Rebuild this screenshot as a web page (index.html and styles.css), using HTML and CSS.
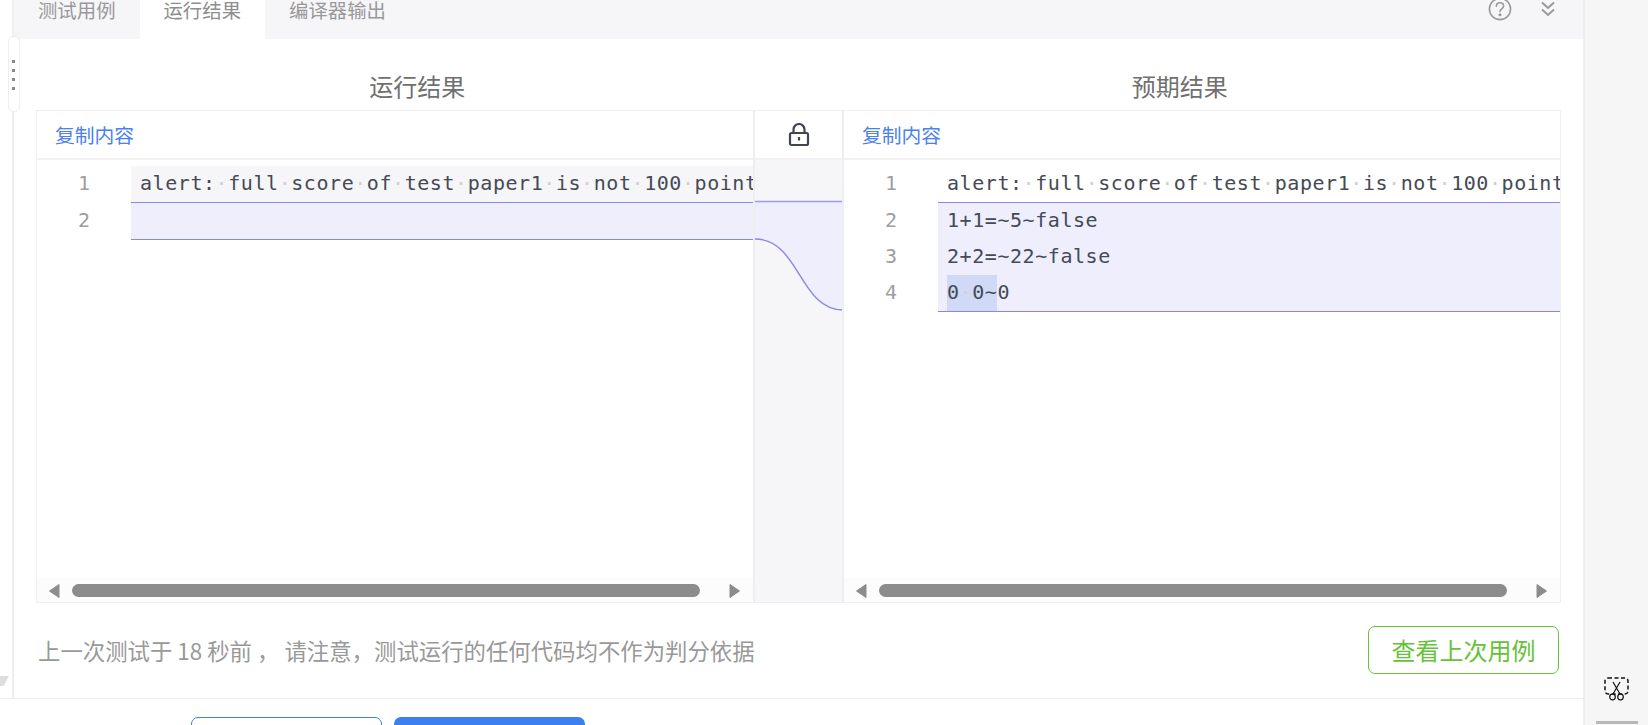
FILE: index.html
```html
<!DOCTYPE html>
<html lang="zh-CN">
<head>
<meta charset="utf-8">
<title>运行结果</title>
<link rel="stylesheet" href="styles.css">
</head>
<body>
<div class="page">
  <div class="left">
    <div class="work">
      <div class="gutter"></div>
      <main class="main">
        <div class="tabs">
          <div class="tab">测试用例</div>
          <div class="tab tab-active">运行结果</div>
          <div class="tab">编译器输出</div>
          <div class="tools">
            <svg class="help" width="24" height="24" viewBox="0 0 24 24" fill="none" stroke="#999" stroke-width="1.6"><circle cx="12" cy="12" r="10.6"/><path d="M8.400 9.200c0-2 1.600-3.400 3.600-3.400s3.600 1.300 3.600 3.200c0 2.600-3.600 2.700-3.600 5.600" stroke-linecap="round"/><circle cx="12" cy="17.800" r=".7" fill="#999"/></svg>
            <svg class="fold" width="16" height="16" viewBox="0 0 16 16" fill="none" stroke="#999" stroke-width="2"><path d="M2 1.500 8 7l6-5.500"/><path d="M2 8.500 8 14l6-5.500"/></svg>
          </div>
        </div>
        <div class="content">
          <div class="titles">
            <h2 class="title">运行结果</h2>
            <h2 class="title">预期结果</h2>
          </div>
          <div class="compare">
            <section class="pane">
              <div class="pane-head"><a class="copy">复制内容</a></div>
              <div class="pane-body">
                <div class="code">
                  <div class="line line-same">
                    <span class="num">1</span>
                    <span class="txt">alert:<i class="ws">·</i>full<i class="ws">·</i>score<i class="ws">·</i>of<i class="ws">·</i>test<i class="ws">·</i>paper1<i class="ws">·</i>is<i class="ws">·</i>not<i class="ws">·</i>100<i class="ws">·</i>points</span>
                  </div>
                  <div class="diff">
                    <div class="line">
                      <span class="num num-out">2</span>
                      <span class="txt"></span>
                    </div>
                  </div>
                </div>
                <div class="scrollbar">
                  <svg class="arrow" width="12" height="16" viewBox="0 0 12 16"><path d="M11 1.500v13L1.500 8z" fill="#8c8c8c" stroke="#8c8c8c" stroke-linejoin="round"/></svg>
                  <div class="thumb"></div>
                  <svg class="arrow arrow-end" width="12" height="16" viewBox="0 0 12 16"><path d="M1 1.500v13L10.500 8z" fill="#8c8c8c" stroke="#8c8c8c" stroke-linejoin="round"/></svg>
                </div>
              </div>
            </section>
            <section class="mid">
              <div class="mid-head">
                <svg width="22" height="24" viewBox="0 0 22 24" fill="none" stroke="#3f4652" stroke-width="2.200"><rect x="2" y="10" width="18" height="12" rx="1.500"/><path d="M5.500 10V6.500a5.500 5.500 0 0 1 11 0V10"/><path d="M11 14v3.500"/></svg>
              </div>
              <svg class="connector" width="88" height="442" viewBox="0 0 89 442" preserveAspectRatio="none">
                <path d="M0 42.500H89V151.500C45 151.500 45 80.500 0 80.500Z" fill="#eeeefd"/>
                <path d="M0 42.500H89" stroke="#9c98ec" stroke-width="1.500" fill="none"/>
                <path d="M0 80C45 80 45 151 89 151" stroke="#8a86e8" stroke-width="1.400" fill="none"/>
              </svg>
            </section>
            <section class="pane pane-right">
              <div class="pane-head"><a class="copy">复制内容</a></div>
              <div class="pane-body">
                <div class="code">
                  <div class="line">
                    <span class="num">1</span>
                    <span class="txt">alert:<i class="ws">·</i>full<i class="ws">·</i>score<i class="ws">·</i>of<i class="ws">·</i>test<i class="ws">·</i>paper1<i class="ws">·</i>is<i class="ws">·</i>not<i class="ws">·</i>100<i class="ws">·</i>points</span>
                  </div>
                  <div class="diff">
                    <div class="line">
                      <span class="num num-out">2</span>
                      <span class="txt">1+1=~5~false</span>
                    </div>
                    <div class="line">
                      <span class="num num-out">3</span>
                      <span class="txt">2+2=~22~false</span>
                    </div>
                    <div class="line">
                      <span class="num num-out">4</span>
                      <span class="txt"><b class="mark">0<i class="ws">·</i>0~</b>0</span>
                    </div>
                  </div>
                </div>
                <div class="scrollbar">
                  <svg class="arrow" width="12" height="16" viewBox="0 0 12 16"><path d="M11 1.500v13L1.500 8z" fill="#8c8c8c" stroke="#8c8c8c" stroke-linejoin="round"/></svg>
                  <div class="thumb"></div>
                  <svg class="arrow arrow-end" width="12" height="16" viewBox="0 0 12 16"><path d="M1 1.500v13L10.500 8z" fill="#8c8c8c" stroke="#8c8c8c" stroke-linejoin="round"/></svg>
                </div>
              </div>
            </section>
          </div>
          <div class="foot">
            <p class="note">上一次测试于 18 秒前 ， 请注意，测试运行的任何代码均不作为判分依据</p>
            <button class="btn-last">查看上次用例</button>
          </div>
        </div>
      </main>
    </div>
    <div class="actions">
      <div class="action action-plain"></div>
      <div class="action action-primary"></div>
    </div>
  </div>
  <aside class="strip">
    <svg class="cut" width="26" height="24" viewBox="0 0 26 24" fill="none" stroke="#111" stroke-width="1.500">
      <rect x="1" y="1" width="23" height="16" rx="3" stroke-dasharray="4 2.500"/>
      <path d="M9 5l7 12M16 5 9 17" stroke-width="1.200"/>
      <circle cx="8.500" cy="20" r="2.800" stroke-width="1.200" fill="#f6f6f6"/>
      <circle cx="16.500" cy="20" r="2.800" stroke-width="1.200" fill="#f6f6f6"/>
    </svg>
    <div class="strip-line"></div>
  </aside>
  <div class="handle"><span></span><span></span><span></span><span></span></div>
  <div class="corner"></div>
</div>
</body>
</html>
```
FILE: styles.css
```css
* { box-sizing: border-box; }
html, body { margin: 0; height: 100%; overflow: hidden; background: #fff; }
body { font-family: "Noto Sans CJK SC", "Noto Sans", sans-serif; }
.page { position: relative; display: flex; width: 1648px; height: 725px; overflow: hidden; }
.left { display: flex; flex-direction: column; flex: 1; min-width: 0; }
.work { display: flex; flex: none; height: 699px; border-bottom: 1px solid #eeeeee; }
.gutter { width: 14px; border-right: 2px solid #eeeeee; flex: none; }
.main { flex: 1; min-width: 0; display: flex; flex-direction: column; }

.tabs { display: flex; height: 39px; background: #f6f6f9; overflow: hidden; flex: none; }
.tab { width: 125.500px; height: 39px; text-align: center; font-size: 19.400px; line-height: 20px; color: #999; }
.tab-active { background: #fff; color: #8e8e8e; }
.tab:nth-child(3) { width: auto; padding-left: 24px; }
.tools { margin-left: auto; display: flex; align-items: flex-start; padding-right: 27px; }
.help { margin-top: -3px; margin-right: 28px; }
.fold { margin-top: 1px; }

.content { flex: 1; padding: 0 22px; display: flex; flex-direction: column; }
.titles { display: flex; height: 71px; padding-top: 32px; }
.title { flex: 1; margin: 0; text-align: center; font-weight: 400; font-size: 24px; line-height: 30px; color: #707070; }

.compare { display: grid; grid-template-columns: 716px 89px 1fr; height: 493px; flex: none; border: 1px solid #eeeeee; }
.pane { display: flex; flex-direction: column; min-width: 0; overflow: hidden; }
.pane-right { border-left: 2px solid #eeeeee; }
.pane-head { height: 49px; flex: none; display: flex; align-items: center; padding: 1px 0 0 18px; border-bottom: 2px solid #f2f2f2; }
.copy { font-size: 19.800px; color: #4a80f0; line-height: 24px; }
.pane-body { flex: 1; min-height: 0; display: flex; flex-direction: column; }
.code { flex: 1; padding-top: 6px; min-height: 0; overflow: hidden; font-family: "DejaVu Sans Mono", "Liberation Mono", monospace; font-size: 20px; letter-spacing: .56px; color: #454a55; }
.line { display: flex; height: 36px; line-height: 34px; white-space: pre; }
.num { flex: none; width: 53px; margin-right: 41px; text-align: right; color: #9e9e9e; letter-spacing: 0; }
.txt { flex: 1; min-width: 0; padding-left: 9px; }
.line-same .txt { background: #f6f6f9; }
.ws { font-style: normal; color: #cfcfcf; }
.diff { padding-top: 1px; }
.diff .txt { background: #eeeefd; }
.diff .line:first-child .txt { box-shadow: 0 -1px 0 #8a86e8; }
.diff .line:last-child { height: 37px; }
.diff .line:last-child .txt { border-bottom: 1px solid #8a86e8; }
.mark { font-weight: 400; display: inline-block; background: #d0daf6; height: 36px; }

.scrollbar { flex: none; height: 24px; background: #fcfcfc; display: flex; align-items: flex-start; padding: 6px 12px 0 11px; }
.arrow { display: block; margin-top: -1px; flex: none; }
.thumb { width: 628px; height: 13px; margin-left: 12px; border-radius: 7px; background: #8c8c8c; flex: none; }
.arrow-end { margin-left: auto; }

.mid { display: flex; flex-direction: column; background: #f6f6f9; border-left: 2px solid #eeeeee; }
.mid-head { height: 49px; flex: none; background: #fff; display: flex; align-items: center; justify-content: center; border-bottom: 2px solid #f2f2f2; }
.connector { display: block; flex: none; margin-top: -1px; }

.foot { flex: 1; display: flex; align-items: center; justify-content: space-between; padding: 0 2px 2px; }
.note { margin: 0; font-size: 22.400px; color: #999; white-space: pre; }
.btn-last { width: 191px; height: 48px; padding: 0; border: 1.500px solid #67c23a; border-radius: 7px; background: #fff; color: #67c23a; font: inherit; font-size: 24px; }

.actions { display: flex; gap: 12px; padding: 18px 0 0 191px; }
.action { width: 191px; height: 40px; flex: none; border-radius: 7px; }
.action-plain { border: 1px solid #3b7ff0; background: #fff; }
.action-primary { background: #3b7ff0; }

.strip { width: 65px; flex: none; background: #f6f6f6; border-left: 2px solid #eeeeee; display: flex; flex-direction: column; align-items: center; padding-top: 677px; }
.cut { display: block; flex: none; }
.strip-line { width: 42px; height: 3px; margin-top: 20px; background: #b8b8b8; flex: none; }

.handle { position: absolute; left: 8px; top: 36px; width: 12px; height: 76px; background: #fff; border: 1px solid #eeeeee; border-radius: 6px; display: flex; flex-direction: column; align-items: center; gap: 6px; padding: 23px 1px 0 0; }
.handle span { width: 3px; height: 3px; background: #888; flex: none; }
.corner { position: absolute; left: 0; top: 676px; width: 9px; height: 10px; background: #dddddd; clip-path: polygon(0 0, 100% 0, 40% 100%, 0 100%); }
```
